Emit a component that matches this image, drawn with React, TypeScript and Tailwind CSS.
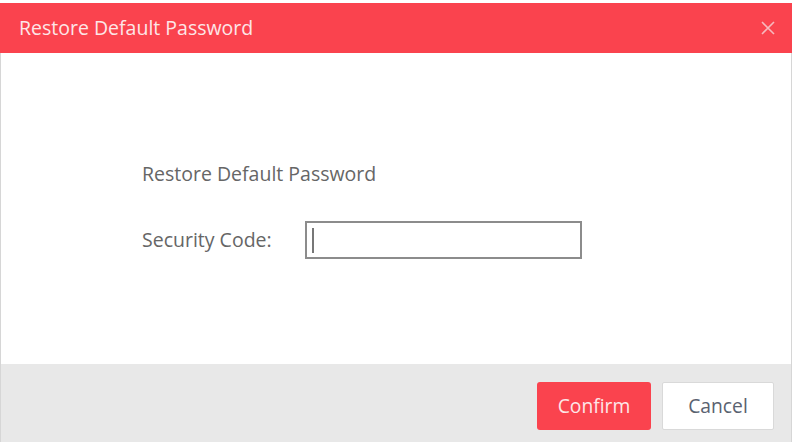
export default function App() {
  return (
    <div
      className="w-[794px] h-[443px] bg-white pt-[3px]"
      style={{ fontFamily: '"Open Sans", "Noto Sans", sans-serif' }}
    >
      <div className="w-[792px] h-[439px] flex flex-col border-x border-[#d6d6d6]">
        <div className="h-[50px] shrink-0 bg-[#fa434e] flex items-center justify-between pl-[19px] pr-[17px] -mx-px">
          <span className="text-[19.5px] text-[#fde6e7]">Restore Default Password</span>
          <svg width="14" height="14" viewBox="0 0 14 14" className="text-[#f6b9bd]">
            <path d="M1 1 L13 13 M13 1 L1 13" stroke="currentColor" strokeWidth="1.6" />
          </svg>
        </div>
        <div className="flex-1 bg-white pl-[141px] pt-[108px]">
          <div className="text-[19.5px] text-[#666] leading-[26px]">Restore Default Password</div>
          <div className="flex items-center mt-[34px]">
            <span className="w-[163px] text-[19.5px] text-[#666]">Security Code:</span>
            <div className="w-[277px] h-[38px] border-2 border-[#8c8c8c] flex items-center pl-[5px]">
              <span className="w-[2px] h-[25px] bg-[#777]" />
            </div>
          </div>
        </div>
        <div className="h-[78px] shrink-0 bg-[#e8e8e8] flex items-start justify-end gap-[11px] pt-[18px] pr-[17px]">
          <button className="w-[114px] h-[48px] rounded-[3px] bg-[#fa434e] text-[#fde6e7] text-[19.3px]">
            Confirm
          </button>
          <button className="w-[112px] h-[48px] rounded-[2px] bg-white border border-[#d9d9d9] text-[#5a6270] text-[19.3px]">
            Cancel
          </button>
        </div>
      </div>
    </div>
  );
}
